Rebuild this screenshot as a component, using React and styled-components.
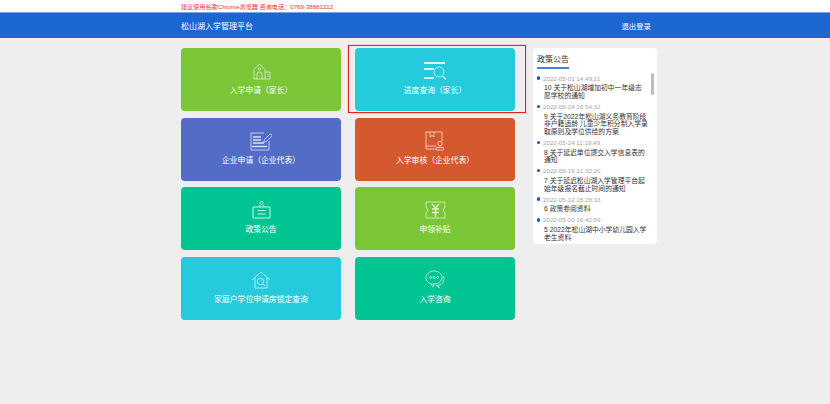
import React from "react";
import styled, { createGlobalStyle } from "styled-components";

const Global = createGlobalStyle`
  html, body { margin: 0; padding: 0; background: #eeeeee; }
  body { font-family: "Liberation Sans", "Noto Sans CJK SC", sans-serif; overflow: hidden; }
`;
const Page = styled.div`width: 830px; height: 404px; overflow: hidden; background: #eee;`;
const Notice = styled.div`
  height: 12px; background: #fff; padding-left: 181px; font-size: 6.14px; line-height: 13px; color: #f0303c;
`;
const Bar = styled.header`
  height: 26px; background: #1c66d2; border-top: 1px solid #7ea6e6; box-sizing: border-box;
  display: flex; align-items: center; justify-content: space-between;
  padding: 0 179px 0 181px; color: #fff; font-size: 8px;
`;
const Logout = styled.span`font-size: 7.4px;`;
const Main = styled.main`
  display: flex; padding: 10px 0 0 181px;
`;
const Grid = styled.div`
  display: grid; grid-template-columns: 160px 160px; grid-auto-rows: 63px; column-gap: 14px; row-gap: 6.67px;
  width: 334px; margin-right: 18px;
`;
const Card = styled.a`
  position: relative; background: ${p => p.$bg}; border-radius: 4px; color: #fff;
  display: flex; flex-direction: column; align-items: center; padding-top: 13px; box-sizing: border-box;
  font-size: 7.8px; line-height: 10px;
`;
const Highlight = styled.span`
  position: absolute; top: -3px; bottom: -2px; left: -7px; right: -11px;
  border: 1px solid #f01f1f; box-shadow: 0 0 0 1px rgba(240, 31, 31, .12);
`;
const IconBox = styled.svg`
  width: ${p => p.$w}px; height: 20px; display: block; margin-bottom: 5px;
  fill: none; stroke: #fff; stroke-width: 0.8; opacity: .8;
`;
const Panel = styled.aside`
  width: 124px; height: 196px; background: #fff; border-radius: 4px; overflow: hidden; position: relative;
  padding: 0 4px; box-sizing: border-box;
`;
const PanelTitle = styled.div`
  display: block; height: 20px; box-sizing: border-box; line-height: 22px;
  font-size: 8px; color: #333; border-bottom: 2px solid #4a80dc; margin: 1px 0 4px; width: 32px;
`;
const Item = styled.div`margin-bottom: 2px;`;
const Stamp = styled.div`
  display: flex; align-items: center; gap: 3px; height: 10px; font-size: 6.2px; color: #a5a5a5; white-space: nowrap; margin-left: -0.5px;
`;
const Dot = styled.span`width: 3.5px; height: 3.5px; border-radius: 50%; background: #1c55c8; flex: none;`;
const ItemText = styled.div`
  font-size: 6.8px; line-height: 7.6px; color: #333; padding: 1.2px 0 0 7px; white-space: pre;
`;
const Thumb = styled.div`
  position: absolute; left: 118px; top: 25px; width: 2.5px; height: 22px; background: #bdbdbd; border-radius: 2px;
`;

const ic = {
  school: [21, <><path d="M3 18V8.500L8.500 3l5.500 5.500V18Z"/><circle cx="8.500" cy="8" r="1.200"/><path d="M6 18v-4.500a2.500 2.500 0 0 1 5 0V18"/><path d="M14 11h5v7h-5M16.500 13.500h1M16.500 15.500h1"/></>],
  search: [24, <><path d="M1 2h21M1 8h10M1 17h10" strokeWidth="2"/><circle cx="16" cy="11" r="5"/><path d="m19.500 15 3.500 3.500" strokeWidth="1.200"/></>],
  edit: [22, <><path d="M19 10v9H1V2h13"/><path d="M3 6h8M3 9h8M3 12h11" strokeWidth="1.400"/><path d="M2 15.500h15" strokeWidth="1.400"/><path d="m13.500 11.500 1-3 5-5a1.200 1.200 0 0 1 2 2l-5 5Z"/></>],
  box: [21, <><path d="M12 18H1V1h16v9"/><path d="M5 1v5l2-1.500L9 6V1"/><path d="M1 15h10"/><circle cx="15" cy="12.500" r="2.200"/><path d="M15 14.700v1.500M11.500 16.500h7v2.500h-7Z"/></>],
  notice: [21, <><path d="M2 7h17v11H2Z" strokeWidth="1"/><circle cx="10.500" cy="2.800" r="1.600"/><path d="m9 5-1 2M12 5l1 2M6.500 10.500h8M6.500 14h8" strokeWidth="1"/></>],
  ticket: [21, <><path d="M1 2h19v5l-2 3 2 3v5H1v-5l2-3-2-3Z"/><path d="m7 4 3.500 4L14 4M10.500 8v9M7 9h7M7 12.500h7" strokeWidth="1.400"/></>],
  house: [21, <><path d="M1 10 10 2l9 8M4 8v10h12V8"/><circle cx="9.500" cy="11.500" r="3.200"/><path d="m12 14 2 2"/></>],
  chat: [21, <><path d="M9 1c4.500 0 8 2.800 8 6.500S13.500 14 9 14H7.500C4 14 1 11 1 7.500S4.500 1 9 1Z"/><circle cx="5.500" cy="7.500" r="1"/><circle cx="9" cy="7.500" r="1"/><circle cx="12.500" cy="7.500" r="1"/><path d="m6 14 2 3 1.500-3M18 6c2 3 1 7-3 9h-2.500l2 3-3.500-3"/></>],
};
const Icon = ({ name }) => {
  const [w, shape] = ic[name];
  return <IconBox $w={w} viewBox={`0 0 ${w} 20`}>{shape}</IconBox>;
};

const cards = [
  ["school", "#7ac636", "入学申请（家长）"],
  ["search", "#25cbdd", "进度查询（家长）", true],
  ["edit", "#536dc6", "企业申请（企业代表）"],
  ["box", "#d5592e", "入学审核（企业代表）"],
  ["notice", "#00c593", "政策公告"],
  ["ticket", "#7ac636", "申领补贴"],
  ["house", "#25cbdd", "家庭户学位申请房锁定查询"],
  ["chat", "#00c593", "入学咨询"],
];
const news = [
  ["2022-05-01 14:49:21", "10 关于松山湖增加初中一年级志\n愿学校的通知"],
  ["2022-05-24 16:54:32", "9 关于2022年松山湖义务教育阶段\n非户籍适龄 儿童少年积分制入学录\n取原则及学位供给的方案"],
  ["2022-05-24 11:19:49", "8 关于延迟单位提交入学信息表的\n通知"],
  ["2022-05-19 21:32:20", "7 关于延迟松山湖入学管理平台起\n始年级报名截止时间的通知"],
  ["2022-05-12 15:28:33", "6 政策参阅资料"],
  ["2022-05-10 16:42:59", "5 2022年松山湖中小学幼儿园入学\n老生资料"],
];

export default function App() {
  return (
    <Page>
      <Global />
      <Notice>建议使用谷歌Chrome浏览器 咨询电话：0769-38881212</Notice>
      <Bar><span>松山湖入学管理平台</span><Logout>退出登录</Logout></Bar>
      <Main>
        <Grid>
          {cards.map(([i, bg, label, sel]) => (
            <Card key={label} $bg={bg}>
              {sel && <Highlight />}
              <Icon name={i} />
              <span>{label}</span>
            </Card>
          ))}
        </Grid>
        <Panel>
          <PanelTitle>政策公告</PanelTitle>
          {news.map(([d, t]) => (
            <Item key={d}>
              <Stamp><Dot />{d}</Stamp>
              <ItemText>{t}</ItemText>
            </Item>
          ))}
          <Thumb />
        </Panel>
      </Main>
    </Page>
  );
}
